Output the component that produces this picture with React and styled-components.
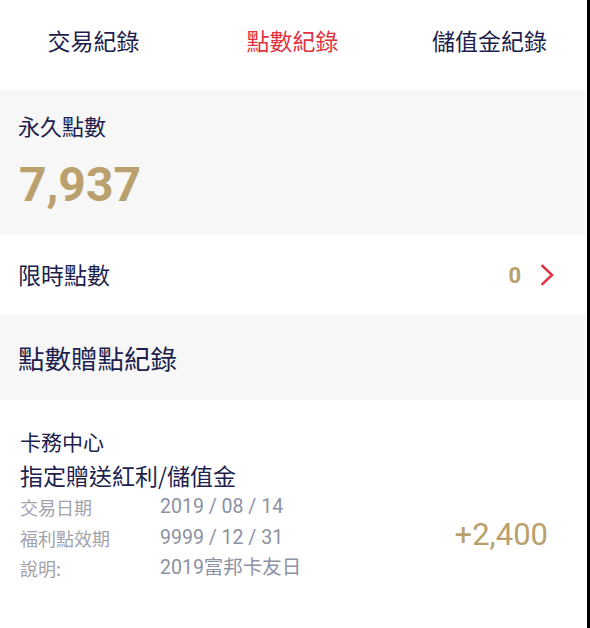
import React from "react";
import styled, { createGlobalStyle } from "styled-components";

const Global = createGlobalStyle`
  html, body { margin: 0; padding: 0; background: #000; }
  body { font-family: Roboto, "Noto Sans CJK TC", "Noto Sans", sans-serif; }
  * { box-sizing: border-box; }
`;

const NAVY = "#201e4c";
const GOLD = "#b9a06c";
const RED = "#e0323f";

const Page = styled.div`
  width: 587px;
  min-height: 628px;
  background: #fff;
  border-right: 2px solid #fff;
  display: flex;
  flex-direction: column;
`;

const Tabs = styled.nav`
  height: 90px;
  display: grid;
  grid-template-columns: repeat(3, 1fr);
  align-items: center;
  background: #fff;
  padding-bottom: 10px;
`;

const Tab = styled.div`
  text-align: center;
  font-size: 23px;
  padding-left: ${(p) => p.$padL || 0}px;
  padding-right: ${(p) => p.$padR || 0}px;
  color: ${(p) => (p.$active ? RED : NAVY)};
  font-family: "Noto Sans CJK TC", sans-serif;
`;

const Section = styled.section`
  background: ${(p) => (p.$gray ? "#f7f7f7" : "#fff")};
  height: ${(p) => p.$h}px;
  padding: 0 20px 0 18px;
  display: flex;
  flex-direction: ${(p) => (p.$column ? "column" : "row")};
  justify-content: ${(p) => (p.$column ? "flex-start" : "space-between")};
  align-items: ${(p) => (p.$column ? "flex-start" : "center")};
`;

const Label = styled.div`
  font-family: "Noto Sans CJK TC", sans-serif;
  font-size: ${(p) => p.$size || 22}px;
  color: ${NAVY};
  line-height: 1.2;
`;

const BigNumber = styled.div`
  font-family: Roboto, sans-serif;
  font-weight: 700;
  font-size: 48px;
  line-height: 1;
  color: ${GOLD};
  margin-top: 23px;
  margin-left: 1px;
`;

const RightGroup = styled.div`
  display: flex;
  align-items: center;
  gap: 19px;
  margin-right: 11px;
`;

const Count = styled.span`
  font-family: Roboto, sans-serif;
  font-weight: 700;
  font-size: 22px;
  color: ${GOLD};
`;

const Item = styled.div`
  padding: 24px 20px 0 20px;
  display: flex;
  justify-content: space-between;
  align-items: flex-end;
`;

const ItemMain = styled.div`
  display: flex;
  flex-direction: column;
`;

const Merchant = styled.div`
  font-family: "Noto Sans CJK TC", sans-serif;
  font-size: 21px;
  color: ${NAVY};
  line-height: 34px;
`;

const Title = styled.div`
  font-family: "Noto Sans CJK TC", sans-serif;
  font-size: 23px;
  color: ${NAVY};
  line-height: 34px;
`;

const DetailRow = styled.div`
  display: grid;
  grid-template-columns: 140px auto;
  line-height: 30.5px;
`;

const DetailKey = styled.span`
  font-family: "Noto Sans CJK TC", sans-serif;
  font-size: 18px;
  color: #a3a3ae;
`;

const DetailValue = styled.span`
  font-family: Roboto, "Noto Sans CJK TC", sans-serif;
  font-size: 19.5px;
  color: #8c91a3;
`;

const Amount = styled.div`
  font-family: Roboto, sans-serif;
  font-size: 31px;
  color: ${GOLD};
  margin-bottom: 31px;
  margin-right: 17px;
`;

const Chevron = () => (
  <svg width="14" height="22" viewBox="0 0 14 22" fill="none">
    <path d="M2.5 2 L12 11 L2.5 20" stroke={RED} strokeWidth="2.5" strokeLinecap="square" />
  </svg>
);

const details = [
  ["交易日期", "2019 / 08 / 14"],
  ["福利點效期", "9999 / 12 / 31"],
  ["說明:", "2019富邦卡友日"],
];

export default function App() {
  return (
    <>
      <Global />
      <Page>
        <Tabs>
          <Tab $padR={8}>交易紀錄</Tab>
          <Tab $active>點數紀錄</Tab>
          <Tab $padL={4}>儲值金紀錄</Tab>
        </Tabs>
        <Section $gray $column $h={145} style={{ paddingTop: 22 }}>
          <Label $size={22}>永久點數</Label>
          <BigNumber>7,937</BigNumber>
        </Section>
        <Section $h={80}>
          <Label $size={23}>限時點數</Label>
          <RightGroup>
            <Count>0</Count>
            <Chevron />
          </RightGroup>
        </Section>
        <Section $gray $h={85}>
          <Label $size={26.5}>點數贈點紀錄</Label>
        </Section>
        <Item>
          <ItemMain>
            <Merchant>卡務中心</Merchant>
            <Title>指定贈送紅利/儲值金</Title>
            {details.map(([k, v]) => (
              <DetailRow key={k}>
                <DetailKey>{k}</DetailKey>
                <DetailValue>{v}</DetailValue>
              </DetailRow>
            ))}
          </ItemMain>
          <Amount>+2,400</Amount>
        </Item>
      </Page>
    </>
  );
}
